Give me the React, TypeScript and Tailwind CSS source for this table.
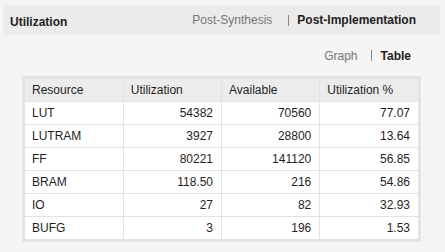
import React from "react";

const rows = [
  { name: "LUT", used: "54382", avail: "70560", pct: "77.07" },
  { name: "LUTRAM", used: "3927", avail: "28800", pct: "13.64" },
  { name: "FF", used: "80221", avail: "141120", pct: "56.85" },
  { name: "BRAM", used: "118.50", avail: "216", pct: "54.86" },
  { name: "IO", used: "27", avail: "82", pct: "32.93" },
  { name: "BUFG", used: "3", avail: "196", pct: "1.53" },
];

export default function App() {
  return (
    <div className="w-[445px] h-[252px] bg-[#f5f5f5] text-[#1e1e1e] text-[12px] font-['Liberation_Sans',Arial,sans-serif] pt-[5px] pl-[3px] pr-[5px]">
      {/* title bar */}
      <div className="h-[30px] bg-[#ebebeb] flex items-center pl-[7px] pr-[24px]">
        <span className="font-bold pt-[4px]">Utilization</span>
        <div className="ml-auto flex items-center">
          <span className="text-[#777]">Post-Synthesis</span>
          <span className="ml-[16px] mr-[8px] w-px h-[11px] bg-[#888]" />
          <span className="font-bold">Post-Implementation</span>
        </div>
      </div>

      {/* view switch */}
      <div className="h-[38px] flex items-center justify-end pr-[29px] pt-[3px]">
        <span className="text-[#777]">Graph</span>
        <span className="ml-[13px] mr-[9px] w-px h-[11px] bg-[#888]" />
        <span className="font-bold">Table</span>
      </div>

      <div className="mt-[3px] ml-[19px] mr-[19px] border-[3px] border-[#e4e4e4] bg-white">
        <table className="w-full table-fixed border-collapse">
          <thead>
            <tr className="bg-[#ececec] h-[22px]">
              {["Resource", "Utilization", "Available", "Utilization %"].map((h, i) => (
                <th
                  key={h}
                  className={`font-normal text-left px-[7px] p-0 border-[#e2e2e2] ${i > 0 ? "border-l" : ""}`}
                >
                  {h}
                </th>
              ))}
            </tr>
          </thead>
          <tbody>
            {rows.map((r) => (
              <tr key={r.name} className="h-[23px] border-t border-[#e2e2e2]">
                <td className="px-[7px]">{r.name}</td>
                <td className="text-right pr-[8px] border-l border-[#e2e2e2]">{r.used}</td>
                <td className="text-right pr-[8px] border-l border-[#e2e2e2]">{r.avail}</td>
                <td className="text-right pr-[8px] border-l border-[#e2e2e2]">{r.pct}</td>
              </tr>
            ))}
          </tbody>
        </table>
      </div>
    </div>
  );
}
